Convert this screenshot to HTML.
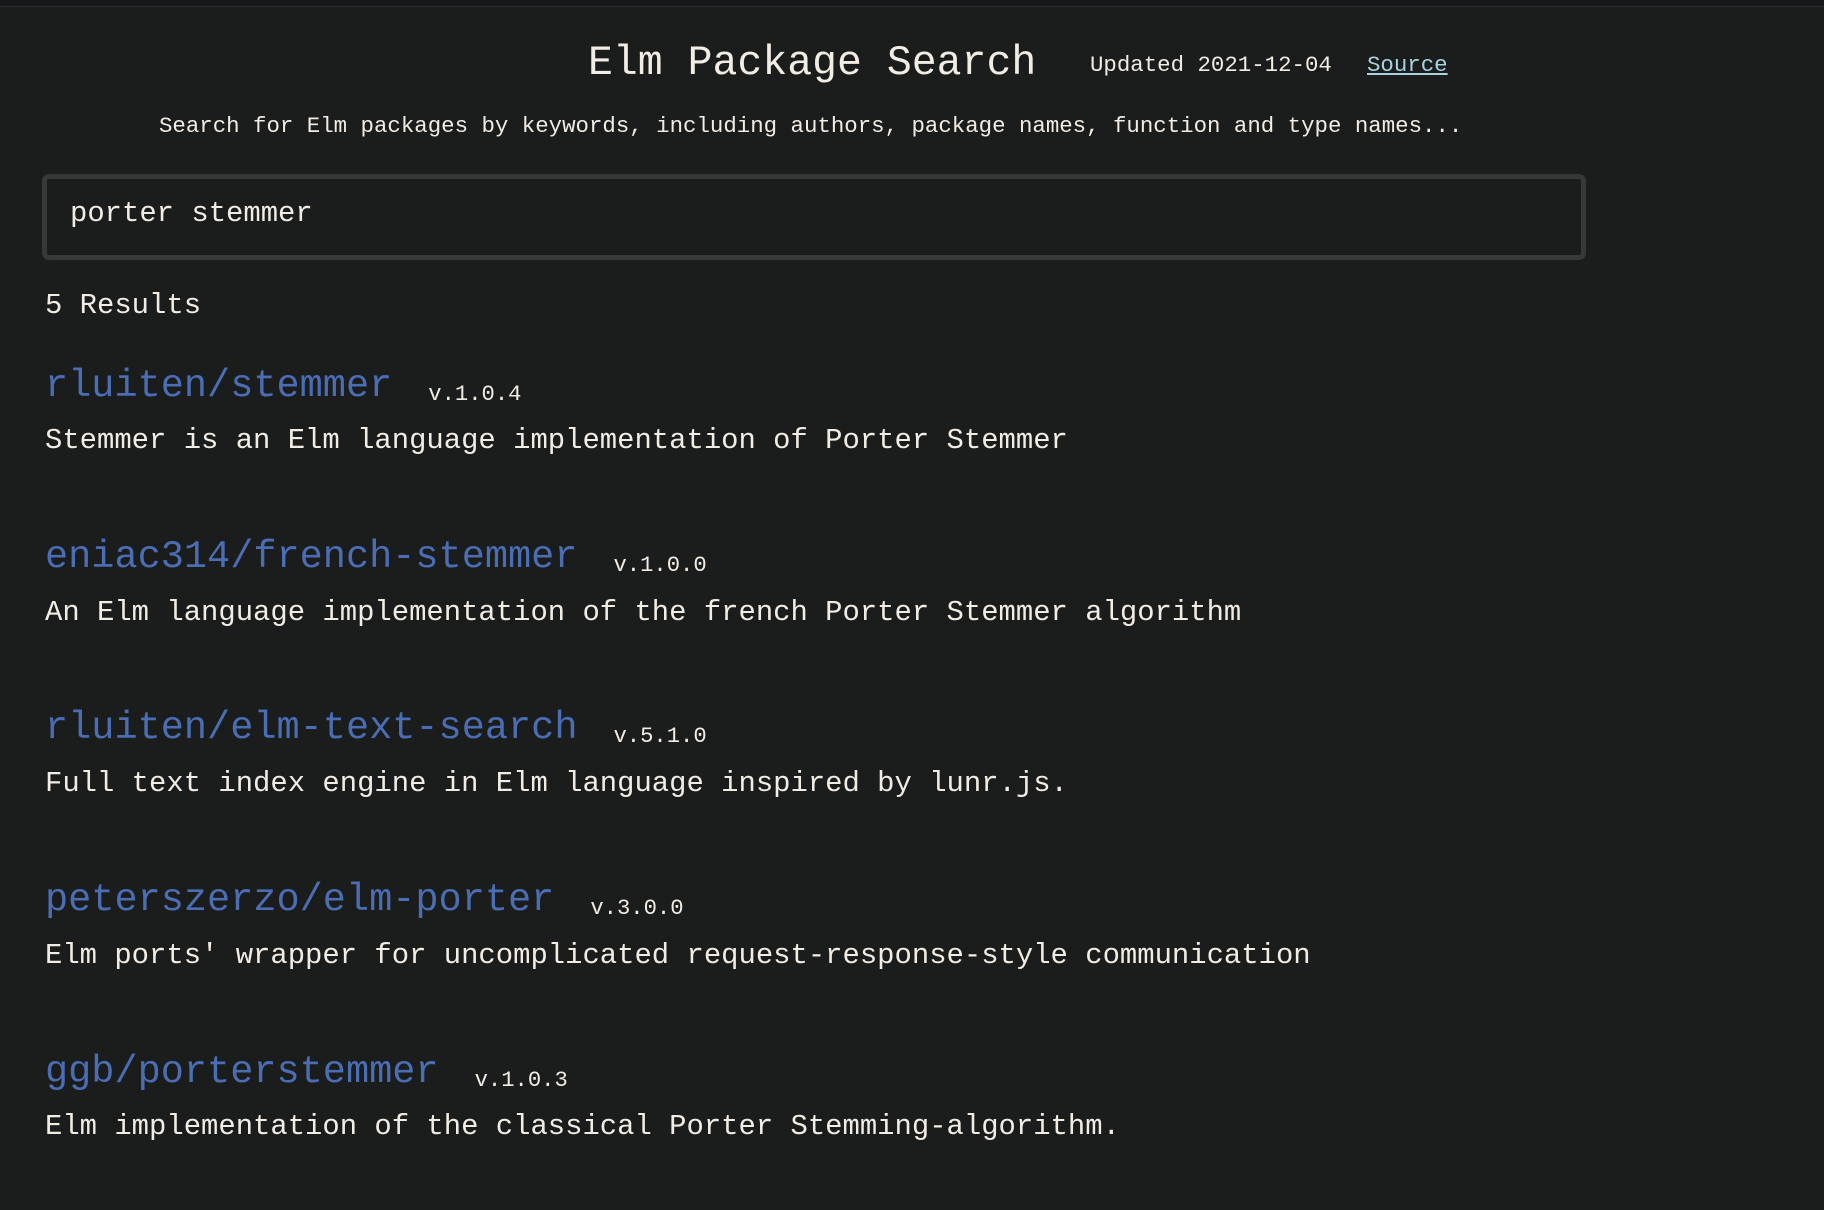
<!DOCTYPE html>
<html><head><meta charset="utf-8"><style>
html,body{margin:0;padding:0;background:#1b1c1c;width:1824px;height:1210px;overflow:hidden;font-family:"Liberation Mono",monospace;color:#f1ece4}
.top{position:absolute;left:0;top:0;width:1824px;height:6px;background:#15171a;border-bottom:1px solid #2c2e30}
.a{position:absolute;white-space:nowrap;line-height:1}
.box{position:absolute;left:42px;top:174px;width:1534px;height:76px;border:5px solid #35393a;border-radius:7px;background:#1b1c1c}
.name{color:#4a6db3;font-size:38.6px}
.ver{font-size:22.2px;margin-left:36px;color:#f1ece4;position:relative;top:4px}
.desc{font-size:28.9px}
</style></head><body>
<div class="top"></div>
<div class="a" style="left:588px;top:43px;font-size:41.5px">Elm Package Search</div>
<div class="a" style="left:1090px;top:54px;font-size:22.4px">Updated 2021-12-04</div>
<div class="a" style="left:1367px;top:54px;font-size:22.4px;color:#a9d2e2;text-decoration:underline">Source</div>
<div class="a" style="left:159px;top:115px;font-size:22.4px">Search for Elm packages by keywords, including authors, package names, function and type names...</div>
<div class="box"></div>
<div class="a" style="left:70px;top:200px;font-size:28.9px">porter stemmer</div>
<div class="a" style="left:45px;top:292px;font-size:28.9px">5 Results</div>

<div class="a" style="left:45px;top:367px"><span class="name">rluiten/stemmer</span><span class="ver">v.1.0.4</span></div>
<div class="a desc" style="left:45px;top:427px">Stemmer is an Elm language implementation of Porter Stemmer</div>

<div class="a" style="left:45px;top:538px"><span class="name">eniac314/french-stemmer</span><span class="ver">v.1.0.0</span></div>
<div class="a desc" style="left:45px;top:599px">An Elm language implementation of the french Porter Stemmer algorithm</div>

<div class="a" style="left:45px;top:709px"><span class="name">rluiten/elm-text-search</span><span class="ver">v.5.1.0</span></div>
<div class="a desc" style="left:45px;top:770px">Full text index engine in Elm language inspired by lunr.js.</div>

<div class="a" style="left:45px;top:881px"><span class="name">peterszerzo/elm-porter</span><span class="ver">v.3.0.0</span></div>
<div class="a desc" style="left:45px;top:942px">Elm ports' wrapper for uncomplicated request-response-style communication</div>

<div class="a" style="left:45px;top:1053px"><span class="name">ggb/porterstemmer</span><span class="ver">v.1.0.3</span></div>
<div class="a desc" style="left:45px;top:1113px">Elm implementation of the classical Porter Stemming-algorithm.</div>
</body></html>
